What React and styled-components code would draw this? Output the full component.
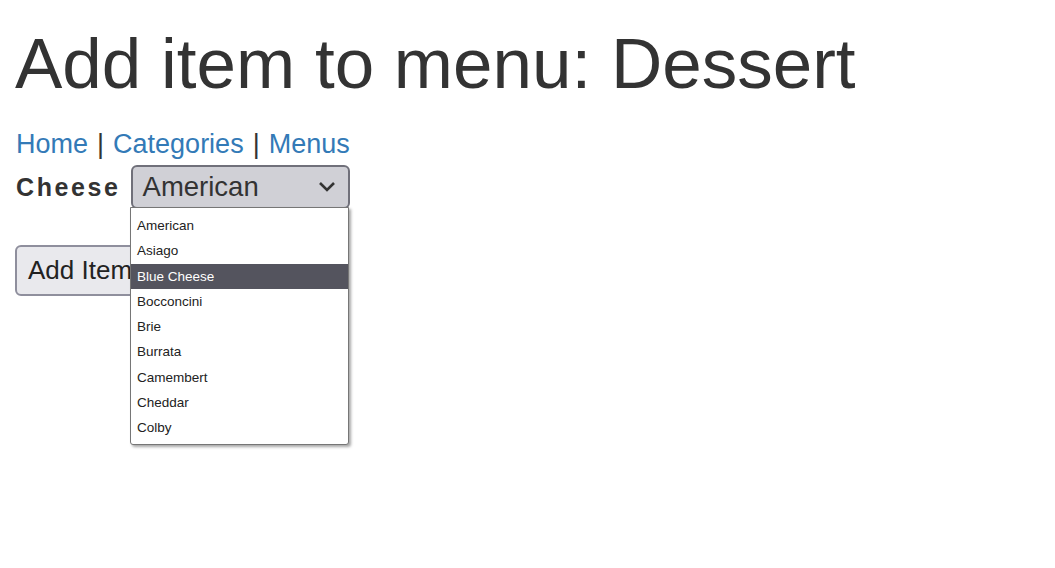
import React from 'react';
import styled, { createGlobalStyle } from 'styled-components';

const GlobalStyle = createGlobalStyle`
  html, body {
    margin: 0;
    padding: 0;
    background: #ffffff;
  }
  body {
    font-family: "Liberation Sans", Arial, Helvetica, sans-serif;
    color: #333333;
  }
`;

const Page = styled.div`
  box-sizing: border-box;
  min-height: 568px;
  padding: 24px 15px 0;
  position: relative;
`;

const Title = styled.h1`
  margin: 0;
  font-size: 71px;
  font-weight: 400;
  line-height: 79px;
  color: #333333;
`;

const Nav = styled.nav`
  margin-top: 23px;
  font-size: 27px;
  line-height: 37px;
  word-spacing: 1.5px;
  color: #333333;
  padding-left: 1px;
`;

const NavLink = styled.a`
  color: #337ab7;
  text-decoration: none;
`;

const Field = styled.div`
  display: flex;
  align-items: center;
  gap: 10px;
  margin-top: 2px;
  position: relative;
`;

const Label = styled.label`
  font-size: 25px;
  font-weight: 700;
  letter-spacing: 2.6px;
  padding-left: 1px;
`;

const SelectBox = styled.div`
  position: relative;
  box-sizing: border-box;
  width: 219px;
  height: 44px;
  background: #d0d0d6;
  border: 2px solid #70707a;
  border-radius: 6px;
  display: flex;
  align-items: center;
  padding: 0 10px;
  font-size: 27.5px;
  color: #333333;
`;

const Chevron = styled.svg`
  position: absolute;
  right: 12px;
  top: 50%;
  transform: translateY(-50%);
`;

const Dropdown = styled.ul`
  position: absolute;
  left: 115px;
  top: 42px;
  width: 219px;
  box-sizing: border-box;
  margin: 0;
  padding: 5px 0 4px;
  list-style: none;
  background: #ffffff;
  border: 1px solid #767676;
  border-radius: 0 0 3px 3px;
  box-shadow: 2px 2px 3px rgba(0, 0, 0, 0.35);
  z-index: 5;
`;

const Option = styled.li`
  height: 25.25px;
  line-height: 25.25px;
  padding: 0 6px;
  font-size: 13.5px;
  color: ${p => (p.selected ? '#ffffff' : '#222222')};
  background: ${p => (p.selected ? '#54545e' : 'transparent')};
`;

const SubmitButton = styled.button`
  margin-top: 36px;
  box-sizing: border-box;
  height: 51px;
  padding: 0 11px;
  font-family: "Liberation Sans", Arial, sans-serif;
  font-size: 26px;
  color: #222222;
  background: #e9e9ed;
  border: 2px solid #8f8f9d;
  border-radius: 6px;
`;

const cheeses = [
  'American',
  'Asiago',
  'Blue Cheese',
  'Bocconcini',
  'Brie',
  'Burrata',
  'Camembert',
  'Cheddar',
  'Colby',
];

export default function App() {
  return (
    <>
      <GlobalStyle />
      <Page>
        <Title>Add item to menu: Dessert</Title>
        <Nav>
          <NavLink href="#">Home</NavLink> | <NavLink href="#">Categories</NavLink> |{' '}
          <NavLink href="#">Menus</NavLink>
        </Nav>
        <Field>
          <Label>Cheese</Label>
          <SelectBox>
            American
            <Chevron width="18" height="12" viewBox="0 0 18 12">
              <path d="M2 2 L9 9 L16 2" fill="none" stroke="#333" strokeWidth="2.6" />
            </Chevron>
          </SelectBox>
          <Dropdown>
            {cheeses.map(c => (
              <Option key={c} selected={c === 'Blue Cheese'}>
                {c}
              </Option>
            ))}
          </Dropdown>
        </Field>
        <SubmitButton>Add Item</SubmitButton>
      </Page>
    </>
  );
}
